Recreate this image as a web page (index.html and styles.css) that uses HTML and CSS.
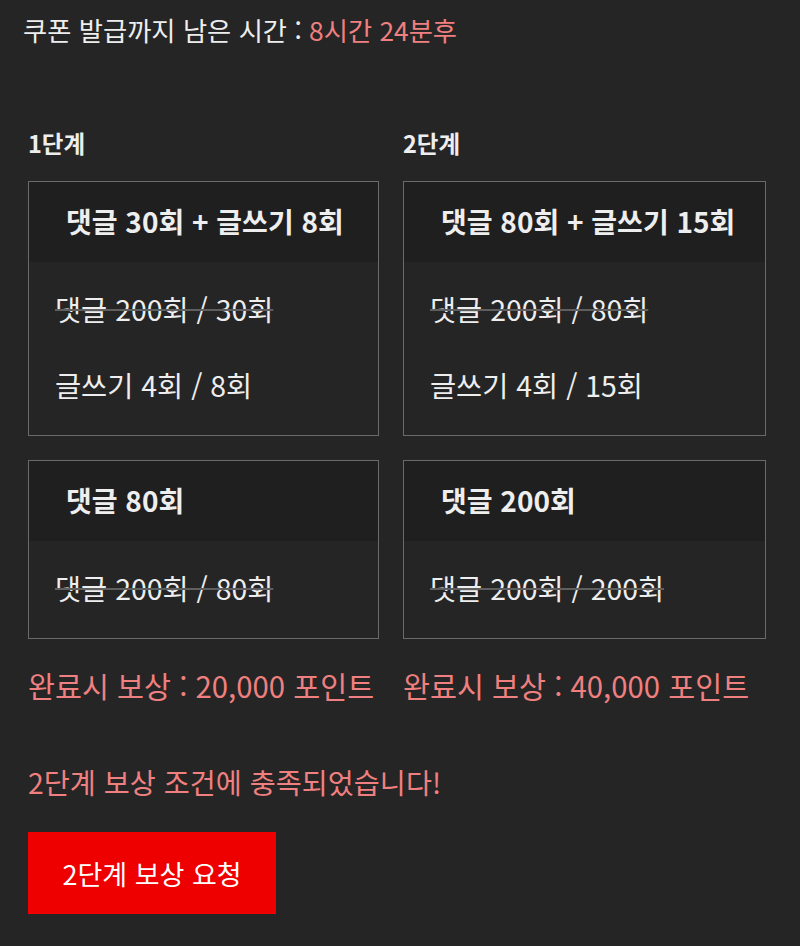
FILE: index.html
```html
<!DOCTYPE html>
<html lang="ko">
<head>
<meta charset="utf-8">
<link rel="stylesheet" href="styles.css">
</head>
<body>
<div class="page">
  <p class="timer">쿠폰 발급까지 남은 시간 : <span class="accent">8시간 24분후</span></p>
  <div class="stages">
    <div class="stage-label">1단계</div>
    <div class="stage-label">2단계</div>

    <div class="card">
      <div class="card-head">댓글 30회 + 글쓰기 8회</div>
      <div class="card-body">
        <div class="row done">댓글 200회 / 30회</div>
        <div class="row">글쓰기 4회 / 8회</div>
      </div>
    </div>
    <div class="card">
      <div class="card-head">댓글 80회 + 글쓰기 15회</div>
      <div class="card-body">
        <div class="row done">댓글 200회 / 80회</div>
        <div class="row">글쓰기 4회 / 15회</div>
      </div>
    </div>

    <div class="card">
      <div class="card-head">댓글 80회</div>
      <div class="card-body">
        <div class="row done">댓글 200회 / 80회</div>
      </div>
    </div>
    <div class="card">
      <div class="card-head">댓글 200회</div>
      <div class="card-body">
        <div class="row done">댓글 200회 / 200회</div>
      </div>
    </div>

    <div class="reward">완료시 보상 : 20,000 포인트</div>
    <div class="reward">완료시 보상 : 40,000 포인트</div>
  </div>
  <p class="notice">2단계 보상 조건에 충족되었습니다!</p>
  <button class="claim">2단계 보상 요청</button>
</div>
</body>
</html>
```

FILE: styles.css
```css
html, body {
  margin: 0;
  padding: 0;
  background: #252525;
}
body {
  font-family: "Noto Sans CJK KR", "Noto Sans", sans-serif;
  color: #eeeeee;
  width: 800px;
  height: 946px;
  overflow: hidden;
}
.page {
  padding: 0 0 0 28px;
}
.timer {
  margin: 0 0 0 -5px;
  font-size: 26.3px;
  line-height: 60px;
  color: #eeeeee;
  white-space: nowrap;
}
.accent {
  color: #f08080;
}
.stages {
  display: grid;
  grid-template-columns: 351px 363px;
  column-gap: 24px;
  margin-top: 68px;
}
.stage-label {
  font-size: 23.5px;
  font-weight: 700;
  line-height: 30px;
  margin-bottom: 23px;
}
.card {
  border: 1px solid #6a6a6a;
  margin-bottom: 24px;
}
.card-head {
  background: #1f1f1f;
  height: 80px;
  line-height: 78px;
  padding: 0 0 0 37px;
  font-size: 28px;
  font-weight: 700;
  white-space: nowrap;
}
.card-body {
  padding: 9px 26px 12px;
}
.row {
  font-size: 28.4px;
  line-height: 76px;
  white-space: nowrap;
}
.row.done {
  text-decoration: line-through;
  text-decoration-color: #5f5f5f;
  text-decoration-thickness: 2px;
}
.reward {
  color: #f08080;
  font-size: 29.3px;
  line-height: 36px;
  margin-top: 4px;
  white-space: nowrap;
}
.notice {
  margin: 61px 0 0;
  color: #f08080;
  font-size: 28.3px;
  line-height: 36px;
  white-space: nowrap;
}
.claim {
  display: block;
  margin-top: 32px;
  width: 248px;
  height: 82px;
  background: #ee0000;
  border: none;
  color: #ffffff;
  font-family: inherit;
  font-size: 27px;
  padding: 0;
}
```
